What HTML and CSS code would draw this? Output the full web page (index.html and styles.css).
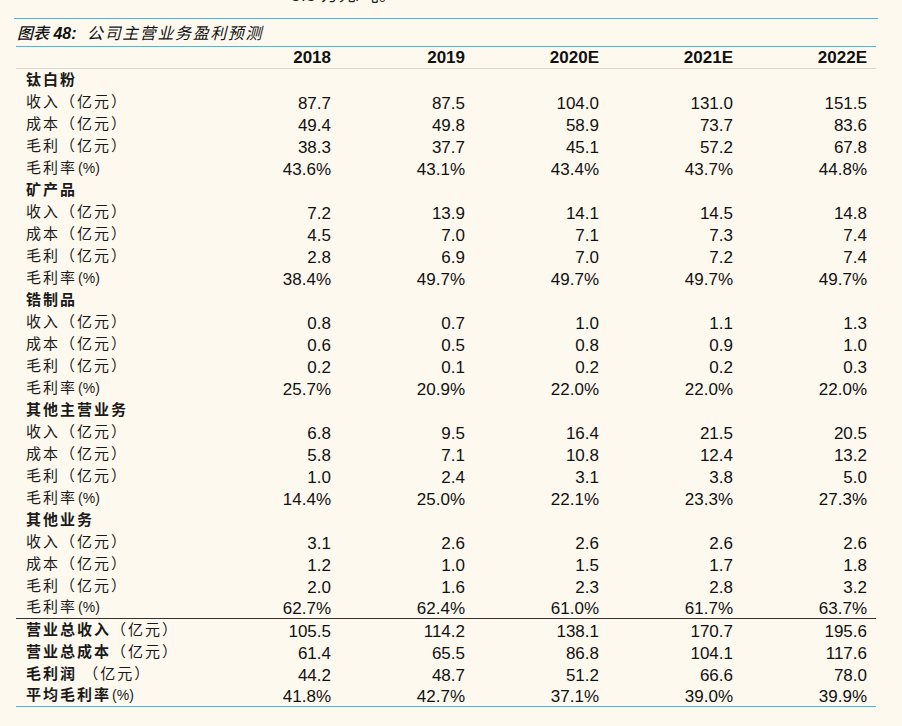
FILE: index.html
```html
<!DOCTYPE html>
<html lang="zh-CN">
<head>
<meta charset="utf-8">
<title>公司主营业务盈利预测</title>
<link rel="stylesheet" href="styles.css">
</head>
<body>
<div class="page">
  <div class="prev"><span class="prev-text">5.5 万元/吨。</span></div>
  <div class="caption"><span class="cap-a">图表</span> <b class="cap-num">48:</b> <span class="cap-b">公司主营业务盈利预测</span></div>
  <table class="fin">
    <colgroup><col class="c-label"><col class="c-num"><col class="c-num"><col class="c-num"><col class="c-num"><col class="c-num"></colgroup>
    <thead>
      <tr><th class="lbl"></th><th>2018</th><th>2019</th><th>2020E</th><th>2021E</th><th>2022E</th></tr>
    </thead>
    <tbody>
      <tr class="grp"><td class="lbl">钛白粉</td><td></td><td></td><td></td><td></td><td></td></tr>
      <tr><td class="lbl">收入（亿元）</td><td>87.7</td><td>87.5</td><td>104.0</td><td>131.0</td><td>151.5</td></tr>
      <tr><td class="lbl">成本（亿元）</td><td>49.4</td><td>49.8</td><td>58.9</td><td>73.7</td><td>83.6</td></tr>
      <tr><td class="lbl">毛利（亿元）</td><td>38.3</td><td>37.7</td><td>45.1</td><td>57.2</td><td>67.8</td></tr>
      <tr><td class="lbl">毛利率<span class="pct">(%)</span></td><td>43.6%</td><td>43.1%</td><td>43.4%</td><td>43.7%</td><td>44.8%</td></tr>
      <tr class="grp"><td class="lbl">矿产品</td><td></td><td></td><td></td><td></td><td></td></tr>
      <tr><td class="lbl">收入（亿元）</td><td>7.2</td><td>13.9</td><td>14.1</td><td>14.5</td><td>14.8</td></tr>
      <tr><td class="lbl">成本（亿元）</td><td>4.5</td><td>7.0</td><td>7.1</td><td>7.3</td><td>7.4</td></tr>
      <tr><td class="lbl">毛利（亿元）</td><td>2.8</td><td>6.9</td><td>7.0</td><td>7.2</td><td>7.4</td></tr>
      <tr><td class="lbl">毛利率<span class="pct">(%)</span></td><td>38.4%</td><td>49.7%</td><td>49.7%</td><td>49.7%</td><td>49.7%</td></tr>
      <tr class="grp"><td class="lbl">锆制品</td><td></td><td></td><td></td><td></td><td></td></tr>
      <tr><td class="lbl">收入（亿元）</td><td>0.8</td><td>0.7</td><td>1.0</td><td>1.1</td><td>1.3</td></tr>
      <tr><td class="lbl">成本（亿元）</td><td>0.6</td><td>0.5</td><td>0.8</td><td>0.9</td><td>1.0</td></tr>
      <tr><td class="lbl">毛利（亿元）</td><td>0.2</td><td>0.1</td><td>0.2</td><td>0.2</td><td>0.3</td></tr>
      <tr><td class="lbl">毛利率<span class="pct">(%)</span></td><td>25.7%</td><td>20.9%</td><td>22.0%</td><td>22.0%</td><td>22.0%</td></tr>
      <tr class="grp"><td class="lbl">其他主营业务</td><td></td><td></td><td></td><td></td><td></td></tr>
      <tr><td class="lbl">收入（亿元）</td><td>6.8</td><td>9.5</td><td>16.4</td><td>21.5</td><td>20.5</td></tr>
      <tr><td class="lbl">成本（亿元）</td><td>5.8</td><td>7.1</td><td>10.8</td><td>12.4</td><td>13.2</td></tr>
      <tr><td class="lbl">毛利（亿元）</td><td>1.0</td><td>2.4</td><td>3.1</td><td>3.8</td><td>5.0</td></tr>
      <tr><td class="lbl">毛利率<span class="pct">(%)</span></td><td>14.4%</td><td>25.0%</td><td>22.1%</td><td>23.3%</td><td>27.3%</td></tr>
      <tr class="grp"><td class="lbl">其他业务</td><td></td><td></td><td></td><td></td><td></td></tr>
      <tr><td class="lbl">收入（亿元）</td><td>3.1</td><td>2.6</td><td>2.6</td><td>2.6</td><td>2.6</td></tr>
      <tr><td class="lbl">成本（亿元）</td><td>1.2</td><td>1.0</td><td>1.5</td><td>1.7</td><td>1.8</td></tr>
      <tr><td class="lbl">毛利（亿元）</td><td>2.0</td><td>1.6</td><td>2.3</td><td>2.8</td><td>3.2</td></tr>
      <tr class="sep"><td class="lbl">毛利率<span class="pct">(%)</span></td><td>62.7%</td><td>62.4%</td><td>61.0%</td><td>61.7%</td><td>63.7%</td></tr>
      <tr><td class="lbl"><b>营业总收入</b>（亿元）</td><td>105.5</td><td>114.2</td><td>138.1</td><td>170.7</td><td>195.6</td></tr>
      <tr><td class="lbl"><b>营业总成本</b>（亿元）</td><td>61.4</td><td>65.5</td><td>86.8</td><td>104.1</td><td>117.6</td></tr>
      <tr><td class="lbl"><b>毛利润</b> （亿元）</td><td>44.2</td><td>48.7</td><td>51.2</td><td>66.6</td><td>78.0</td></tr>
      <tr class="last"><td class="lbl"><b>平均毛利率</b><span class="pct">(%)</span></td><td>41.8%</td><td>42.7%</td><td>37.1%</td><td>39.0%</td><td>39.9%</td></tr>
    </tbody>
  </table>
</div>
</body>
</html>
```

FILE: styles.css
```css
html, body {
  margin: 0;
  padding: 0;
  background: #fdf9ef;
}

body {
  color: #111;
  font-family: "Liberation Sans", "Noto Sans CJK SC", sans-serif;
}

.page {
  width: 864px;
  margin-left: 14px;
}

.prev {
  height: 18px;
  overflow: hidden;
  padding-left: 277px;
  font-size: 17px;
  color: #222;
}

.prev-text {
  display: block;
  margin-top: -14px;
  line-height: 19px;
  letter-spacing: 0.5px;
}

.caption {
  border-top: 1px solid #45b6e6;
  height: 27px;
  line-height: 27px;
  padding-left: 3px;
  font-style: italic;
  font-size: 16px;
  color: #111;
}

.cap-a {
  font-family: "Noto Sans CJK SC", sans-serif;
  font-weight: 500;
}

.cap-num {
  font-family: "Liberation Sans", sans-serif;
  font-weight: bold;
  font-size: 16px;
}

.cap-b {
  font-family: "Noto Sans CJK SC", sans-serif;
  letter-spacing: 1.6px;
  padding-left: 6px;
}

.fin {
  margin-left: 2px;
  width: 860px;
  table-layout: fixed;
  border-collapse: separate;
  border-spacing: 0;
  border-top: 1px solid #45b6e6;
}

.c-label {
  width: 190px;
}

.c-num {
  width: 134px;
}

.fin th {
  height: 21px;
  padding: 1px 9px 0 0;
  line-height: 20px;
  box-sizing: border-box;
  border-bottom: 1px solid #d9d8d0;
  text-align: right;
  font-size: 17px;
  font-weight: bold;
  color: #111;
  vertical-align: top;
}

.fin tr {
  height: 22px;
}

.fin td {
  padding: 3px 9px 0 0;
  line-height: 19px;
  text-align: right;
  font-size: 17px;
  vertical-align: top;
  white-space: nowrap;
}

.fin td.lbl {
  text-align: left;
  padding-top: 1px;
  padding-left: 10px;
  padding-right: 0;
  font-size: 15px;
  letter-spacing: 2px;
  font-family: "Liberation Sans", "Noto Sans CJK SC", sans-serif;
  color: #1a1a1a;
}

.fin .lbl b {
  font-weight: bold;
}

.grp td.lbl {
  font-weight: bold;
  letter-spacing: 2px;
}

.pct {
  letter-spacing: 0;
  padding-left: 1px;
  font-size: 14px;
  line-height: 0;
}

.sep td {
  border-bottom: 1px solid #333;
  line-height: 18px;
}

.last td {
  border-bottom: 1px solid #45b6e6;
  line-height: 18px;
}
```
